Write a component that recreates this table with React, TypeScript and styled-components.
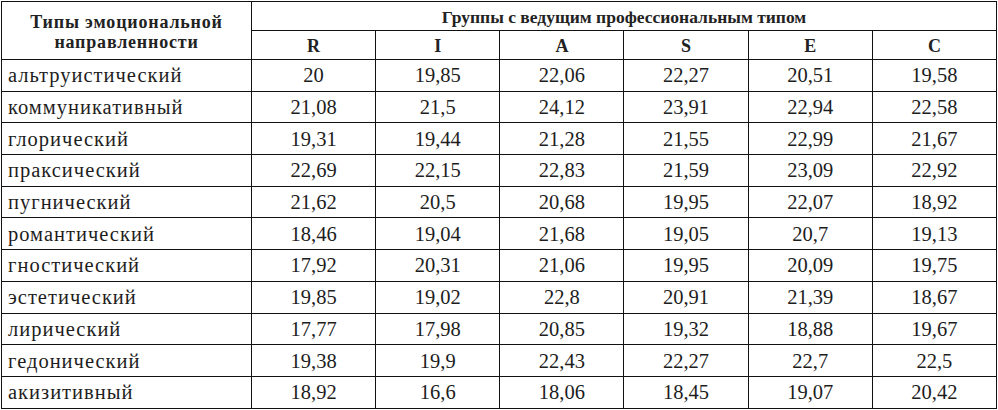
import * as React from "react"
import styled, { createGlobalStyle } from "styled-components"

const GlobalStyle = createGlobalStyle`
    html, body {
        margin: 0;
        padding: 0;
        background: #ffffff;
    }
    body {
        font-family: "Liberation Serif", serif;
        color: #1d1d1d;
    }
`

const Sheet = styled.div`
    padding: 1px 0 0 1px;
`

const Table = styled.table`
    border-collapse: collapse;
    table-layout: fixed;
    width: 996px;
    border: 1.5px solid #111;
    font-family: "Liberation Serif", serif;
`

const HeadCell = styled.th<{ $size?: number }>`
    height: 26px;
    border: 1.5px solid #111;
    padding: 2px 0 0 0;
    font-family: "Liberation Serif", serif;
    font-weight: bold;
    font-size: ${(p) => p.$size ?? 17.5}px;
    line-height: 20px;
    text-align: center;
    vertical-align: middle;
    color: #222;
`

const TypeHead = styled(HeadCell)`
    height: auto;
    vertical-align: top;
    padding-top: 10px;
    letter-spacing: 0.8px;
`

const Row = styled.tr`
    height: 31.7px;
`

const RowLabel = styled.td`
    border: 1.5px solid #111;
    padding: 1px 0 0 6px;
    font-family: "Liberation Serif", serif;
    font-size: 20.5px;
    letter-spacing: 1px;
    text-align: left;
    vertical-align: middle;
    white-space: nowrap;
    color: #1d1d1d;
`

const ValueCell = styled.td`
    border: 1.5px solid #111;
    padding: 1px 0 0 0;
    font-family: "Liberation Serif", serif;
    font-size: 20.5px;
    text-align: center;
    vertical-align: middle;
    color: #1d1d1d;
`

const groups = ["R", "I", "A", "S", "E", "C"]

const rows: [string, string[]][] = [
    ["альтруистический", ["20", "19,85", "22,06", "22,27", "20,51", "19,58"]],
    ["коммуникативный", ["21,08", "21,5", "24,12", "23,91", "22,94", "22,58"]],
    ["глорический", ["19,31", "19,44", "21,28", "21,55", "22,99", "21,67"]],
    ["праксический", ["22,69", "22,15", "22,83", "21,59", "23,09", "22,92"]],
    ["пугнический", ["21,62", "20,5", "20,68", "19,95", "22,07", "18,92"]],
    ["романтический", ["18,46", "19,04", "21,68", "19,05", "20,7", "19,13"]],
    ["гностический", ["17,92", "20,31", "21,06", "19,95", "20,09", "19,75"]],
    ["эстетический", ["19,85", "19,02", "22,8", "20,91", "21,39", "18,67"]],
    ["лирический", ["17,77", "17,98", "20,85", "19,32", "18,88", "19,67"]],
    ["гедонический", ["19,38", "19,9", "22,43", "22,27", "22,7", "22,5"]],
    ["акизитивный", ["18,92", "16,6", "18,06", "18,45", "19,07", "20,42"]],
]

export default function App() {
    return (
        <>
            <GlobalStyle />
            <Sheet>
                <Table>
                    <colgroup>
                        <col style={{ width: 250 }} />
                        {groups.map((g) => (
                            <col key={g} />
                        ))}
                    </colgroup>
                    <thead>
                        <tr>
                            <TypeHead rowSpan={2} $size={18}>
                                Типы эмоциональной
                                <br />
                                направленности
                            </TypeHead>
                            <HeadCell colSpan={6}>Группы с ведущим профессиональным типом</HeadCell>
                        </tr>
                        <tr>
                            {groups.map((g) => (
                                <HeadCell key={g} $size={18}>
                                    {g}
                                </HeadCell>
                            ))}
                        </tr>
                    </thead>
                    <tbody>
                        {rows.map(([label, values]) => (
                            <Row key={label}>
                                <RowLabel>{label}</RowLabel>
                                {values.map((v, i) => (
                                    <ValueCell key={i}>{v}</ValueCell>
                                ))}
                            </Row>
                        ))}
                    </tbody>
                </Table>
            </Sheet>
        </>
    )
}
